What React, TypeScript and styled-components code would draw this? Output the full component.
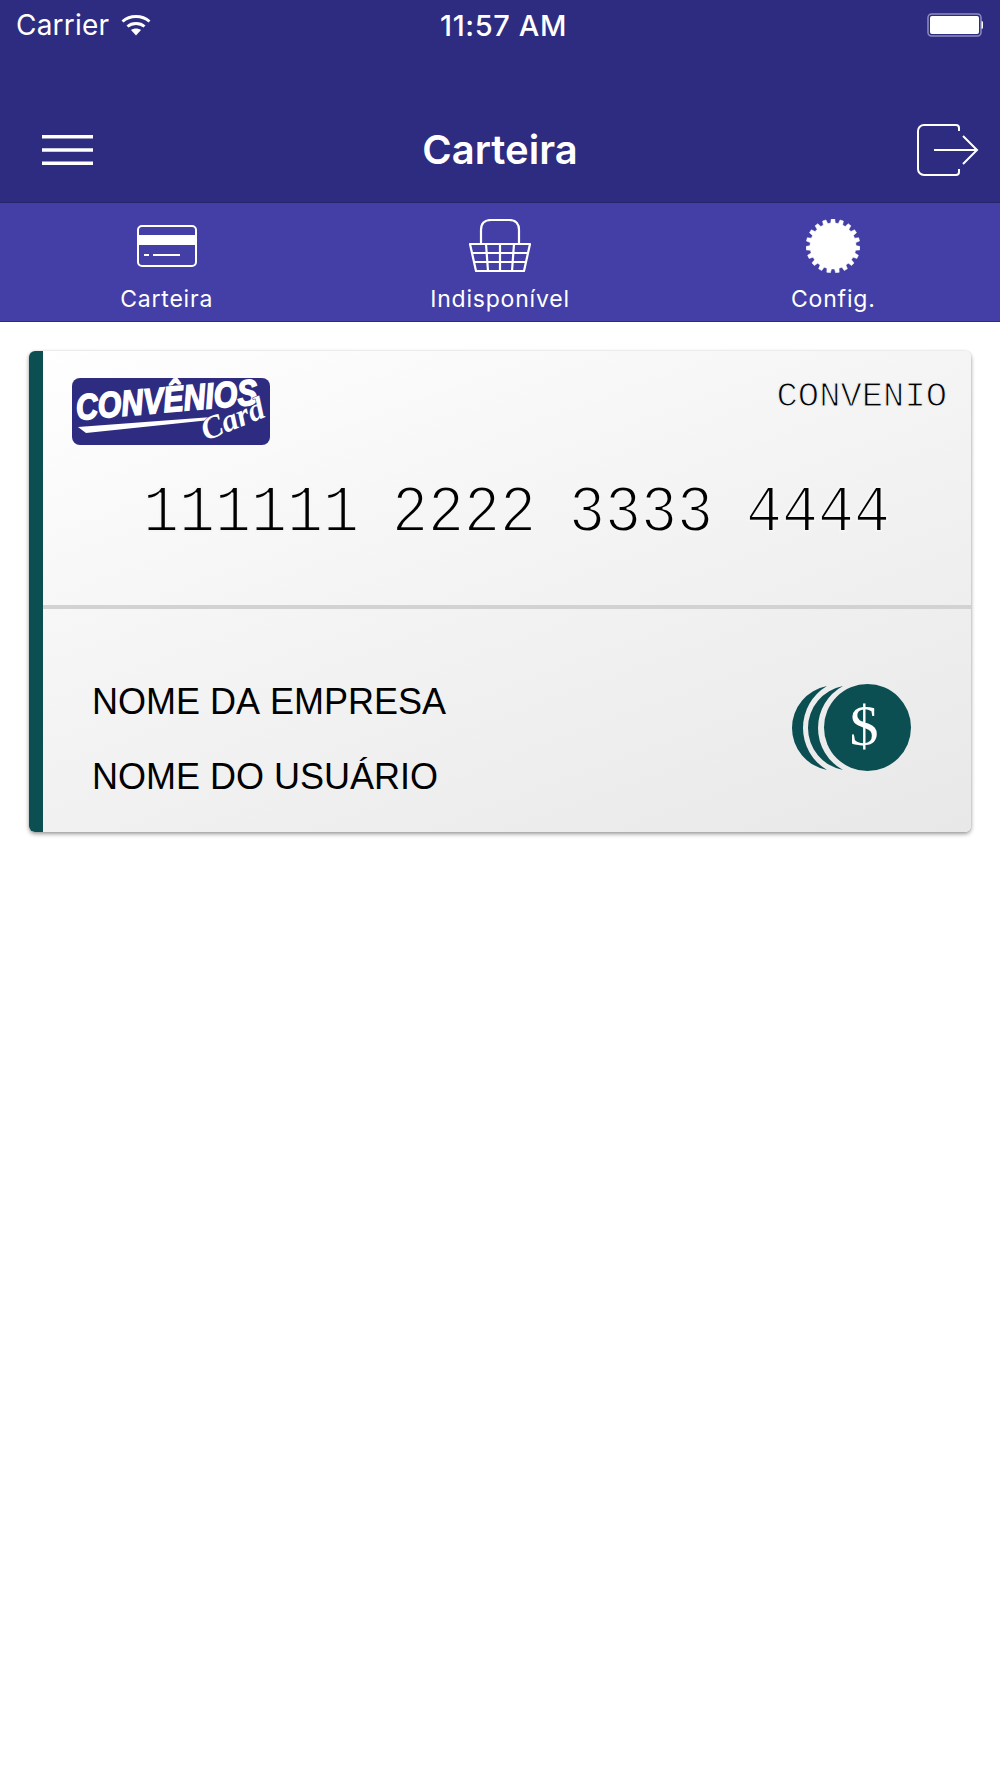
import * as React from 'react';
import styled, { createGlobalStyle } from 'styled-components';

const GlobalStyle = createGlobalStyle`
  html, body {
    margin: 0;
    padding: 0;
    background: #fff;
    font-family: Inter, "Noto Sans", sans-serif;
  }
`;

const Page = styled.div`
  width: 1000px;
  min-height: 1778px;
  background: #fff;
`;

const Header = styled.header`
  background: #2e2c80;
  border-bottom: 1px solid #26256b;
  color: #fff;
`;

const StatusBar = styled.div`
  display: grid;
  grid-template-columns: 1fr auto 1fr;
  align-items: center;
  height: 50px;
  padding: 0 17px 0 16px;
`;

const Carrier = styled.div`
  display: flex;
  align-items: center;
  gap: 12px;
  font-size: 28px;
  letter-spacing: 0.2px;
`;

const Clock = styled.div`
  margin-left: 8px;
  font-size: 29px;
  font-weight: 500;
  letter-spacing: 0.6px;
`;

const Battery = styled.svg`
  justify-self: end;
`;

const NavBar = styled.div`
  display: grid;
  grid-template-columns: 1fr auto 1fr;
  align-items: center;
  height: 152px;
  box-sizing: border-box;
  padding: 47px 21px 0;
`;

const NavIcon = styled.svg<{ $end?: boolean }>`
  display: block;
  justify-self: ${(p) => (p.$end ? 'end' : 'start')};
  margin-left: ${(p) => (p.$end ? '0' : '21px')};
`;

const Title = styled.h1`
  margin: 0;
  font-size: 40px;
  font-weight: 600;
`;

const Tabs = styled.nav`
  display: grid;
  grid-template-columns: repeat(3, 1fr);
  height: 118px;
  background: #433fa6;
  border-bottom: 1px solid #2e2c80;
`;

const Tab = styled.div`
  display: flex;
  flex-direction: column;
  align-items: center;
  padding-top: 16px;
  color: #fff;
`;

const TabIcon = styled.div`
  display: flex;
  align-items: center;
  justify-content: center;
  height: 54px;
`;

const TabLabel = styled.span`
  margin-top: 11px;
  font-size: 23px;
  line-height: 30px;
  letter-spacing: 0.8px;
`;

const Card = styled.section`
  display: flex;
  height: 481px;
  margin: 29px 29px 0;
  border-radius: 6px;
  background: linear-gradient(160deg, #ffffff 0%, #f4f4f4 45%, #e8e8e8 100%);
  box-shadow: 0 2px 4px rgba(0, 0, 0, 0.4), 0 0 2px rgba(0, 0, 0, 0.1);
`;

const CardStripe = styled.div`
  flex: 0 0 14px;
  border-radius: 6px 0 0 6px;
  background: #0c4f53;
`;

const CardBody = styled.div`
  flex: 1;
  display: flex;
  flex-direction: column;
`;

const CardTop = styled.div`
  height: 258px;
  box-sizing: border-box;
  padding: 27px 24px 0 29px;
  border-bottom: 4px solid #d2d2d2;
`;

const CardTopRow = styled.div`
  display: flex;
  justify-content: space-between;
  align-items: flex-start;
`;

const CardType = styled.div`
  font-family: "Liberation Mono", monospace;
  font-size: 35.5px;
  line-height: 38px;
  color: #000;
  -webkit-text-stroke: 1.1px #f1f1f1;
`;

const CardNumber = styled.div`
  margin: 33px 0 0 71px;
  font-family: "Liberation Mono", monospace;
  font-size: 60px;
  line-height: 70px;
  word-spacing: -3px;
  white-space: pre;
  color: #000;
  transform: scaleY(1.12);
  -webkit-text-stroke: 1.8px #f5f5f5;
`;

const CardBottom = styled.div`
  flex: 1;
  display: flex;
  justify-content: space-between;
  align-items: flex-start;
  padding: 55px 57px 0 49px;
`;

const Names = styled.div`
  font-family: "Liberation Sans", Arial, sans-serif;
  font-size: 36px;
  line-height: 75px;
  color: #000;
  font-kerning: none;
`;

const Coins = styled.svg`
  margin-top: 16px;
`;

function gearPath(cx: number, cy: number, teeth: number, outer: number, inner: number) {
  const pts: string[] = [];
  const step = (Math.PI * 2) / teeth;
  for (let i = 0; i < teeth; i++) {
    const a = i * step - Math.PI / 2;
    [
      [a - step * 0.3, inner],
      [a - step * 0.2, outer],
      [a + step * 0.2, outer],
      [a + step * 0.3, inner],
    ].forEach(([t, r]) => {
      pts.push(`${(cx + r * Math.cos(t)).toFixed(2)} ${(cy + r * Math.sin(t)).toFixed(2)}`);
    });
  }
  return `M${pts.join('L')}Z`;
}

function WifiIcon() {
  return (
    <svg width="30" height="22" viewBox="0 0 30 22">
      <path d="M1.5 7.5C9 .8 21 .8 28.500 7.500" fill="none" stroke="#fff" strokeWidth="3" />
      <path d="M6.500 12.500C11 8.500 19 8.500 23.500 12.500" fill="none" stroke="#fff" strokeWidth="3" />
      <path d="M10 16c3-2 7-2 10 0l-5 5.500z" fill="#fff" />
    </svg>
  );
}

function BatteryIcon() {
  return (
    <Battery width="56" height="24" viewBox="0 0 56 24">
      <rect x="1" y="1" width="53" height="22" rx="3.500" fill="#2e2c80" stroke="#8d8cc0" strokeWidth="1.500" />
      <rect x="3" y="3" width="49" height="18" rx="2" fill="#fff" />
      <path d="M55 8.500c1.500 .4 1.500 6.600 0 7z" fill="#fff" stroke="#fff" />
    </Battery>
  );
}

function MenuIcon() {
  return (
    <NavIcon width="51" height="30" viewBox="0 0 51 30">
      <path d="M0 1.750H51M0 15H51M0 28.250H51" stroke="#fff" strokeWidth="3.500" />
    </NavIcon>
  );
}

function ExitIcon() {
  return (
    <NavIcon $end width="62" height="52" viewBox="0 0 62 52">
      <path
        d="M39 1H7a6 6 0 0 0-6 6v38a6 6 0 0 0 6 6h32a3 3 0 0 0 3-3v-3M42 7V4a3 3 0 0 0-3-3"
        fill="none"
        stroke="#fff"
        strokeWidth="2"
      />
      <path d="M17 26H60M46 12L60 26L46 40" fill="none" stroke="#fff" strokeWidth="2" />
    </NavIcon>
  );
}

function CardIcon() {
  return (
    <svg width="60" height="42" viewBox="0 0 60 42">
      <rect x="1" y="1" width="58" height="40" rx="4" fill="none" stroke="#fff" strokeWidth="2" />
      <rect x="1" y="10" width="58" height="10" fill="#fff" />
      <path d="M7 30H12M16 30H43" stroke="#fff" strokeWidth="2" />
    </svg>
  );
}

function BasketIcon() {
  return (
    <svg width="64" height="54" viewBox="0 0 64 54">
      <path
        d="M2 25H62L56 52H8ZM13 25V11Q13 1 23 1H41Q51 1 51 11V25"
        fill="none"
        stroke="#fff"
        strokeWidth="2.200"
        strokeLinejoin="round"
      />
      <path
        d="M5 34H59M6.500 43H57.500M18 25L20 52M32 25V52M46 25L44 52"
        fill="none"
        stroke="#fff"
        strokeWidth="2.200"
      />
    </svg>
  );
}

function GearIcon() {
  return (
    <svg width="54" height="54" viewBox="0 0 54 54">
      <path d={gearPath(27, 27, 19, 27, 23)} fill="#fff" stroke="#fff" strokeWidth="0.500" strokeLinejoin="round" />
    </svg>
  );
}

function BrandLogo() {
  return (
    <svg width="198" height="67" viewBox="0 0 198 67" overflow="visible">
      <rect width="198" height="67" rx="8" fill="#2e2c80" />
      <g transform="rotate(-5 5 42)">
        <text
          x="5"
          y="42"
          fontFamily="Liberation Sans, sans-serif"
          fontWeight="700"
          fontStyle="italic"
          fontSize="36"
          textLength="182"
          lengthAdjust="spacingAndGlyphs"
          fill="#fff"
          stroke="#fff"
          strokeWidth="1.600"
        >
          CONVÊNIOS
        </text>
      </g>
      <path d="M6 49L140 39L138 42L14 55Z" fill="#fff" />
      <g transform="rotate(-22 134 63)">
        <text
          x="134"
          y="63"
          fontFamily="Liberation Serif, serif"
          fontStyle="italic"
          fontWeight="700"
          fontSize="32"
          fill="#fff"
          stroke="#2e2c80"
          strokeWidth="1"
          paintOrder="stroke"
        >
          Card
        </text>
      </g>
    </svg>
  );
}

function CoinsIcon() {
  return (
    <Coins width="124" height="94" viewBox="0 0 124 94">
      <path d="M37 6A42.700 42.700 0 0 0 37 90A48.750 48.750 0 0 1 37 6Z" fill="#0c4f53" />
      <path d="M53 6A42.700 42.700 0 0 0 53 90A47.800 47.800 0 0 1 53 6Z" fill="#0c4f53" />
      <circle cx="77.500" cy="47.500" r="43.500" fill="#0c4f53" />
      <text
        x="74"
        y="65"
        textAnchor="middle"
        fontFamily="Liberation Serif, serif"
        fontSize="58"
        fill="#fff"
      >
        $
      </text>
    </Coins>
  );
}

export default function App(): JSX.Element {
  return (
    <Page>
      <GlobalStyle />
      <Header>
        <StatusBar>
          <Carrier>
            Carrier
            <WifiIcon />
          </Carrier>
          <Clock>11:57 AM</Clock>
          <BatteryIcon />
        </StatusBar>
        <NavBar>
          <MenuIcon />
          <Title>Carteira</Title>
          <ExitIcon />
        </NavBar>
      </Header>
      <Tabs>
        <Tab>
          <TabIcon>
            <CardIcon />
          </TabIcon>
          <TabLabel>Carteira</TabLabel>
        </Tab>
        <Tab>
          <TabIcon>
            <BasketIcon />
          </TabIcon>
          <TabLabel>Indisponível</TabLabel>
        </Tab>
        <Tab>
          <TabIcon>
            <GearIcon />
          </TabIcon>
          <TabLabel>Config.</TabLabel>
        </Tab>
      </Tabs>
      <Card>
        <CardStripe />
        <CardBody>
          <CardTop>
            <CardTopRow>
              <BrandLogo />
              <CardType>CONVENIO</CardType>
            </CardTopRow>
            <CardNumber>111111 2222 3333 4444</CardNumber>
          </CardTop>
          <CardBottom>
            <Names>
              <div>NOME DA EMPRESA</div>
              <div>NOME DO USUÁRIO</div>
            </Names>
            <CoinsIcon />
          </CardBottom>
        </CardBody>
      </Card>
    </Page>
  );
}
